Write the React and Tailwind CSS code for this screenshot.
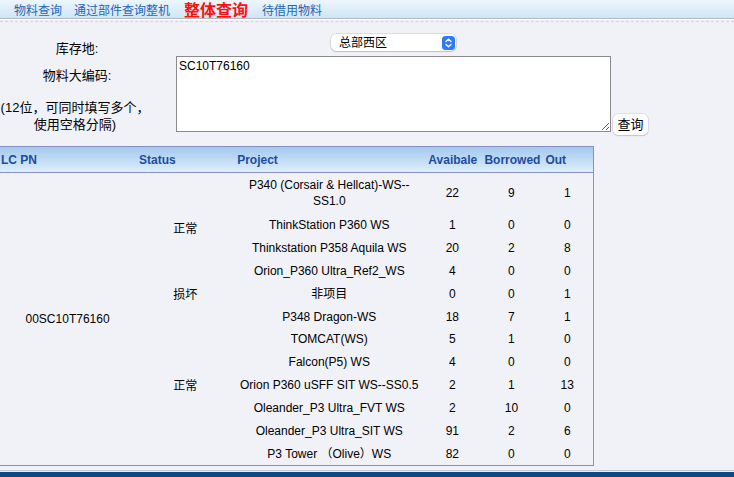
import React from "react";

const FONT = { fontFamily: '"Liberation Sans", Arial, "Noto Sans CJK SC", sans-serif' };

const rows = [
  { project: ["P340 (Corsair & Hellcat)-WS--", "SS1.0"], a: 22, b: 9, o: 1, tall: true },
  { project: ["ThinkStation P360 WS"], a: 1, b: 0, o: 0 },
  { project: ["Thinkstation P358 Aquila WS"], a: 20, b: 2, o: 8 },
  { project: ["Orion_P360 Ultra_Ref2_WS"], a: 4, b: 0, o: 0 },
  { project: ["非项目"], a: 0, b: 0, o: 1 },
  { project: ["P348 Dragon-WS"], a: 18, b: 7, o: 1 },
  { project: ["TOMCAT(WS)"], a: 5, b: 1, o: 0 },
  { project: ["Falcon(P5) WS"], a: 4, b: 0, o: 0 },
  { project: ["Orion P360 uSFF SIT WS--SS0.5"], a: 2, b: 1, o: 13 },
  { project: ["Oleander_P3 Ultra_FVT WS"], a: 2, b: 10, o: 0 },
  { project: ["Oleander_P3 Ultra_SIT WS"], a: 91, b: 2, o: 6 },
  { project: ["P3 Tower （Olive）WS"], a: 82, b: 0, o: 0 },
];

const status = { 0: ["正常", 4], 4: ["损坏", 1], 5: ["正常", 7] };

function Stepper() {
  return (
    <svg width="13" height="14" viewBox="0 0 13 14">
      <rect x="0" y="0" width="13" height="14" rx="3.5" fill="#2f7bf5" />
      <path d="M4 5.5 L6.5 3.2 L9 5.5" stroke="#fff" strokeWidth="1.3" fill="none" strokeLinecap="round" strokeLinejoin="round" />
      <path d="M4 8.5 L6.5 10.8 L9 8.5" stroke="#fff" strokeWidth="1.3" fill="none" strokeLinecap="round" strokeLinejoin="round" />
    </svg>
  );
}

export default function App() {
  return (
    <div className="w-[734px] h-[477px] overflow-hidden bg-[#f1f2f8] text-black" style={FONT}>
      {/* top nav */}
      <div className="h-[19px] bg-gradient-to-b from-[#edf6fc] to-[#cfe6f5] border-b border-[#b3bac2] flex items-center pl-[14px] pt-[3px] text-[12px] leading-[16px] text-[#2466b6]">
        <span>物料查询</span>
        <span className="ml-[12px]">通过部件查询整机</span>
        <span className="ml-[14px] text-[16px] font-bold text-[#ff1010] leading-[16px]">整体查询</span>
        <span className="ml-[14px]">待借用物料</span>
      </div>
      <div className="h-px bg-white" />
      <div className="h-[2px] border-b border-dashed border-[#d2d2d2]" />

      {/* form */}
      <div className="flex">
        <div className="w-[154px] text-center text-[13px] pt-[19px]">
          <div className="leading-[16px]">库存地:</div>
          <div className="leading-[16px] mt-[11px]">物料大编码:</div>
          <div className="leading-[17px] mt-[15px]">
            <div className="-ml-[4px]">(12位，可同时填写多个，</div>
            <div className="-ml-[4px]">使用空格分隔)</div>
          </div>
        </div>
        <div className="ml-[22px] pt-[12px] flex flex-col">
          <div className="w-[435px] flex justify-center">
            <div className="w-[125px] h-[17px] bg-white rounded-[5px] shadow-[0_0_0_0.5px_rgba(0,0,0,0.18),0_1px_1.5px_rgba(0,0,0,0.12)] flex items-center justify-between pl-[8px] pr-[1.5px]">
              <span className="text-[12px] leading-[14px]">总部西区</span>
              <Stepper />
            </div>
          </div>
          <div className="flex items-end mt-[5px]">
            <textarea
              defaultValue="SC10T76160"
              className="w-[435px] h-[76px] bg-white border border-[#8a8a8a] px-[2px] py-[2px] text-[12px] leading-[15px] outline-none"
              style={FONT}
            />
            <button className="ml-[2px] -mb-[3px] w-[35px] h-[21px] bg-white rounded-[5px] shadow-[0_0_0_0.5px_rgba(0,0,0,0.15),0_1px_1.5px_rgba(0,0,0,0.12)] text-[13px] leading-[15px]">
              查询
            </button>
          </div>
        </div>
      </div>

      {/* table */}
      <table className="mt-[13px] w-[594px] table-fixed border-collapse border-t border-r border-b border-[#8890c4] text-[12px] leading-[16px]">
        <colgroup>
          <col className="w-[135px]" />
          <col className="w-[100px]" />
          <col className="w-[188px]" />
          <col className="w-[58px]" />
          <col className="w-[60px]" />
          <col className="w-[52px]" />
        </colgroup>
        <thead>
          <tr className="h-[26px] bg-gradient-to-b from-[#a3c9ee] to-[#ddeefb] border-b border-[#8890c4] text-[#1d4c9e] font-bold">
            <th className="text-left pl-[1px] pt-[1px] font-bold">LC PN</th>
            <th className="text-left pl-[4px] pt-[1px] font-bold">Status</th>
            <th className="text-left pl-[2px] pt-[1px] font-bold">Project</th>
            <th className="text-left pl-[5px] pt-[1px] font-bold whitespace-nowrap">Avaibale</th>
            <th className="text-left pl-[3px] pt-[1px] font-bold whitespace-nowrap">Borrowed</th>
            <th className="text-left pl-[4px] pt-[1px] font-bold">Out</th>
          </tr>
        </thead>
        <tbody>
          {rows.map((r, i) => (
            <tr key={i} className={r.tall ? "h-[41px]" : "h-[22.9px]"}>
              {i === 0 && (
                <td rowSpan={12} className="text-center align-middle">00SC10T76160</td>
              )}
              {status[i] && (
                <td rowSpan={status[i][1]} className="text-center align-middle pt-[2px]">{status[i][0]}</td>
              )}
              <td className="text-center whitespace-nowrap">
                {r.project.map((p, j) => (
                  <div key={j}>{p}</div>
                ))}
              </td>
              <td className="text-center">{r.a}</td>
              <td className="text-center">{r.b}</td>
              <td className="text-center">{r.o}</td>
            </tr>
          ))}
        </tbody>
      </table>

      {/* footer */}
      <div className="mt-[4px] h-px bg-[#c3c9dc]" />
      <div className="h-px bg-[#eef0f6]" />
      <div className="h-[12px] bg-[#0d4a85]" />
    </div>
  );
}
